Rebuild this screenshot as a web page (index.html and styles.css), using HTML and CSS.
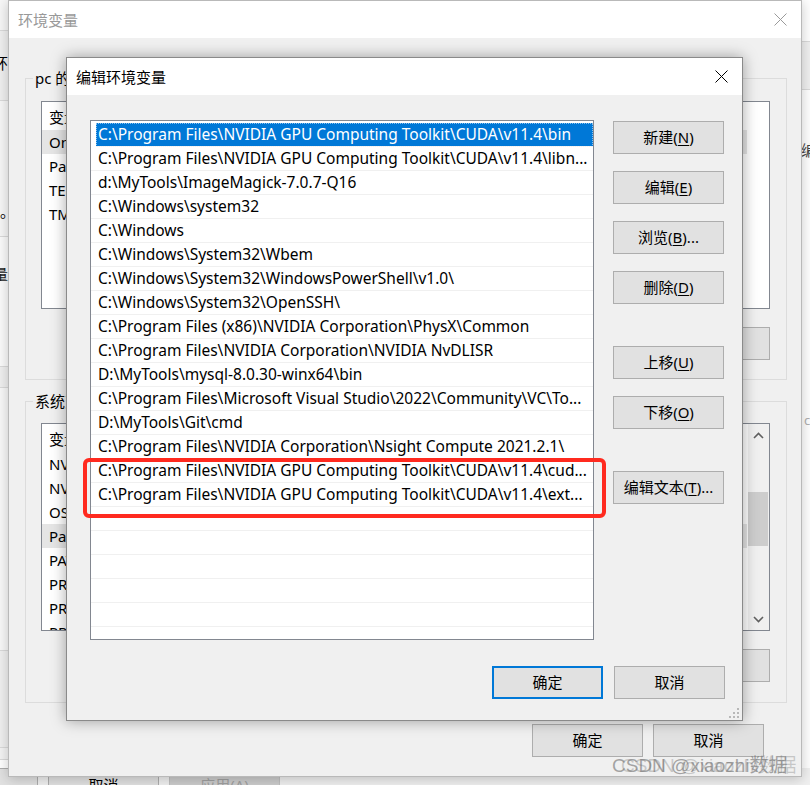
FILE: index.html
```html
<!DOCTYPE html>
<html lang="zh-CN">
<head>
<meta charset="utf-8">
<title>编辑环境变量</title>
<link rel="stylesheet" href="styles.css">
</head>
<body>
<div class="desk">

  <div class="win behind">
    <div class="behind-main">
      <div class="edge edge-left">
        <div class="el el1"></div>
        <div class="el el2 end"><span>环</span></div>
        <div class="el el3"><span>。</span></div>
        <div class="el el4 end"><span>量</span></div>
        <div class="el el5"></div>
        <div class="el el6"></div>
        <div class="el el7"></div>
        <div class="el el8"></div>
      </div>
      <div class="edge edge-right">
        <div class="er er1"></div>
        <div class="er er2"></div>
        <div class="er er3"><span>编</span></div>
        <div class="er er4"><span>c</span></div>
      </div>
    </div>
    <div class="behind-foot">
      <div class="bbtn">确定</div>
      <div class="bbtn">取消</div>
      <div class="bbtn off">应用(A)</div>
    </div>
  </div>

  <div class="win back">
    <div class="titlebar">
      <span class="title">环境变量</span>
      <span class="close"><svg width="13" height="13" viewBox="0 0 13 13"><path d="M0.5 0.5L12.5 12.5M12.5 0.5L0.5 12.5" stroke="#9a9a9a" stroke-width="1"/></svg></span>
    </div>
    <div class="back-body">
      <fieldset class="group">
        <legend>pc 的用户变量(<u>U</u>)</legend>
        <div class="lv">
          <div class="lv-main">
            <div class="lv-head"><span class="c1">变量</span><span class="c2">值</span></div>
            <div class="lv-row hl"><span class="c1">OneDrive</span><span class="c2">C:\Users\pc\OneDrive</span></div>
            <div class="lv-row"><span class="c1">Path</span><span class="c2">C:\Users\pc\AppData\Local\Microsoft\WindowsApps;</span></div>
            <div class="lv-row"><span class="c1">TEMP</span><span class="c2">C:\Users\pc\AppData\Local\Temp</span></div>
            <div class="lv-row"><span class="c1">TMP</span><span class="c2">C:\Users\pc\AppData\Local\Temp</span></div>
          </div>
        </div>
        <div class="btnrow">
          <button class="btn">新建(<u>N</u>)...</button>
          <button class="btn">编辑(<u>E</u>)...</button>
          <button class="btn">删除(<u>D</u>)</button>
        </div>
      </fieldset>
      <fieldset class="group sys">
        <legend>系统变量(<u>S</u>)</legend>
        <div class="lv">
          <div class="lv-main">
            <div class="lv-head"><span class="c1">变量</span><span class="c2">值</span></div>
            <div class="lv-row"><span class="c1">NVCUDASAMPLES_ROOT</span><span class="c2">C:\ProgramData\NVIDIA Corporation\CUDA Samples\v11.4</span></div>
            <div class="lv-row"><span class="c1">NVCUDASAMPLES11_4_ROOT</span><span class="c2">C:\ProgramData\NVIDIA Corporation\CUDA Samples\v11.4</span></div>
            <div class="lv-row"><span class="c1">OS</span><span class="c2">Windows_NT</span></div>
            <div class="lv-row hl"><span class="c1">Path</span><span class="c2">C:\Program Files\NVIDIA GPU Computing Toolkit\CUDA\v11.4\bin;</span></div>
            <div class="lv-row"><span class="c1">PATHEXT</span><span class="c2">.COM;.EXE;.BAT;.CMD;.VBS;.VBE;.JS;.JSE;.WSF;.WSH;.MSC</span></div>
            <div class="lv-row"><span class="c1">PROCESSOR_ARCHITECTURE</span><span class="c2">AMD64</span></div>
            <div class="lv-row"><span class="c1">PROCESSOR_IDENTIFIER</span><span class="c2">Intel64 Family 6</span></div>
            <div class="lv-row"><span class="c1">PROCESSOR_LEVEL</span><span class="c2">6</span></div>
          </div>
          <div class="vscroll">
            <div class="sb-btn"><svg width="11" height="7" viewBox="0 0 11 7"><path d="M1 6L5.5 1.5L10 6" fill="none" stroke="#606060" stroke-width="1.6"/></svg></div>
            <div class="sb-track"><div class="sb-thumb"></div></div>
            <div class="sb-btn"><svg width="11" height="7" viewBox="0 0 11 7"><path d="M1 1L5.5 5.5L10 1" fill="none" stroke="#606060" stroke-width="1.6"/></svg></div>
          </div>
        </div>
        <div class="btnrow">
          <button class="btn">新建(<u>W</u>)...</button>
          <button class="btn">编辑(<u>I</u>)...</button>
          <button class="btn">删除(<u>L</u>)</button>
        </div>
      </fieldset>
      <div class="back-foot">
        <button class="btn">确定</button>
        <button class="btn">取消</button>
      </div>
    </div>
  </div>

  <div class="win front">
    <div class="titlebar">
      <span class="title">编辑环境变量</span>
      <span class="close"><svg width="13" height="13" viewBox="0 0 13 13"><path d="M0.5 0.5L12.5 12.5M12.5 0.5L0.5 12.5" stroke="#000" stroke-width="1"/></svg></span>
    </div>
    <div class="front-body">
      <div class="front-main">
        <div class="plist">
          <div class="prow sel">C:\Program Files\NVIDIA GPU Computing Toolkit\CUDA\v11.4\bin</div>
          <div class="prow">C:\Program Files\NVIDIA GPU Computing Toolkit\CUDA\v11.4\libn...</div>
          <div class="prow">d:\MyTools\ImageMagick-7.0.7-Q16</div>
          <div class="prow">C:\Windows\system32</div>
          <div class="prow">C:\Windows</div>
          <div class="prow">C:\Windows\System32\Wbem</div>
          <div class="prow">C:\Windows\System32\WindowsPowerShell\v1.0\</div>
          <div class="prow">C:\Windows\System32\OpenSSH\</div>
          <div class="prow">C:\Program Files (x86)\NVIDIA Corporation\PhysX\Common</div>
          <div class="prow">C:\Program Files\NVIDIA Corporation\NVIDIA NvDLISR</div>
          <div class="prow">D:\MyTools\mysql-8.0.30-winx64\bin</div>
          <div class="prow">C:\Program Files\Microsoft Visual Studio\2022\Community\VC\To...</div>
          <div class="prow">D:\MyTools\Git\cmd</div>
          <div class="prow">C:\Program Files\NVIDIA Corporation\Nsight Compute 2021.2.1\</div>
          <div class="prow">C:\Program Files\NVIDIA GPU Computing Toolkit\CUDA\v11.4\cud...</div>
          <div class="prow">C:\Program Files\NVIDIA GPU Computing Toolkit\CUDA\v11.4\ext...</div>
          <div class="prow"></div>
          <div class="prow"></div>
          <div class="prow"></div>
          <div class="prow"></div>
          <div class="prow"></div>
          <div class="prow"></div>
        </div>
        <div class="side">
          <button class="btn">新建(<u>N</u>)</button>
          <button class="btn">编辑(<u>E</u>)</button>
          <button class="btn">浏览(<u>B</u>)...</button>
          <button class="btn">删除(<u>D</u>)</button>
          <button class="btn sep">上移(<u>U</u>)</button>
          <button class="btn">下移(<u>O</u>)</button>
          <button class="btn sep">编辑文本(<u>T</u>)...</button>
        </div>
      </div>
      <div class="front-foot">
        <button class="btn default">确定</button>
        <button class="btn">取消</button>
      </div>
      <svg class="grip" width="12" height="12" viewBox="0 0 12 12">
        <rect x="9" y="1" width="2" height="2" fill="#b8b8b8"/>
        <rect x="5" y="5" width="2" height="2" fill="#b8b8b8"/>
        <rect x="9" y="5" width="2" height="2" fill="#b8b8b8"/>
        <rect x="1" y="9" width="2" height="2" fill="#b8b8b8"/>
        <rect x="5" y="9" width="2" height="2" fill="#b8b8b8"/>
        <rect x="9" y="9" width="2" height="2" fill="#b8b8b8"/>
      </svg>
    </div>
  </div>

  <div class="mark"></div>
  <div class="watermark">CSDN @xiaozhi数据</div>
</div>
</body>
</html>
```

FILE: styles.css
```css
* { box-sizing: border-box; }
html, body { margin: 0; padding: 0; }
body {
  width: 810px;
  height: 785px;
  overflow: hidden;
  background: #fff;
  font-family: "Noto Sans", "Noto Sans CJK SC", sans-serif;
  font-size: 15px;
  color: #000;
}
u { text-decoration: underline; text-underline-offset: 2px; }

.desk { position: relative; width: 810px; height: 785px; overflow: hidden; }
.win { position: absolute; }

/* window far behind */
.behind {
  left: 0; top: 0; width: 810px; height: 785px;
  display: flex; flex-direction: column;
  background: #fff;
}
.behind-main { flex: 1; min-height: 0; display: flex; justify-content: space-between; }
.edge { display: flex; flex-direction: column; overflow: hidden; }
.edge-left { width: 8px; }
.edge-right { width: 9px; }
.el, .er {
  flex: none; display: flex; overflow: hidden; white-space: nowrap;
  line-height: 20px; border-bottom: 1px solid #dadada;
}
.el.end { justify-content: flex-end; }
.el1 { height: 31px; background: #f7f7f7; }
.el2 { height: 70px; background: #f0f0f0; padding-top: 22px; }
.el3 { height: 136px; background: #f7f7f7; padding-top: 100px; }
.el4 { height: 130px; background: #fbfbfb; padding-top: 27px; color: #222; }
.el5 { height: 21px; background: #f0f0f0; }
.el6 { height: 263px; background: #f9f9f9; }
.el7 { height: 97px; background: #f0f0f0; }
.el8 { height: 12px; background: #f4f4f4; }
.er1 { height: 42px; background: #fff; }
.er2 { height: 48px; background: #f0f0f0; }
.er3 { height: 320px; background: #fff; border-bottom: none; padding-top: 50px; color: #444; }
.er4 { height: 100px; background: #fff; border-bottom: none; color: #b0b0b0; font-size: 13px; padding-left: 3px; }

.behind-foot {
  flex: none; height: 17px; overflow: hidden;
  display: flex; gap: 10px; margin-left: -73px; background: #f0f0f0;
}
.bbtn {
  flex: none; width: 111px; height: 33px;
  border: 1px solid #adadad; background: #e1e1e1;
  display: flex; align-items: center; justify-content: center;
}
.bbtn.off { background: #cccccc; border-color: #bfbfbf; color: #a0a0a0; }

/* shared window parts */
.titlebar { flex: none; height: 37px; background: #fff; display: flex; align-items: center; }
.title { flex: 1; padding-left: 9px; line-height: 20px; }
.close { width: 42px; height: 37px; display: flex; align-items: center; justify-content: center; }

.btn {
  flex: none; width: 111px; height: 33px; margin: 0; padding: 0 0 2px;
  border: 1px solid #adadad; background: #e1e1e1;
  font: inherit; color: #000; line-height: 20px;
  display: flex; align-items: center; justify-content: center;
}
.btn.default { border: 2px solid #0078d7; }

/* environment variables window */
.back {
  left: 8px; top: 0; width: 794px; height: 777px;
  border: 1px solid #b9b9b9; background: #f0f0f0;
  box-shadow: 0 2px 12px rgba(0, 0, 0, 0.22);
  display: flex; flex-direction: column;
}
.back .title { color: #999; }
.back-body { flex: 1; padding: 30px 14px 0 16px; display: flex; flex-direction: column; }
.group {
  margin: 0; min-width: 0;
  border: 1px solid #dcdcdc;
  padding: 13px 16px 19px 15px;
}
.group.sys { margin-top: 11px; padding-top: 12px; padding-bottom: 20px; }
.group legend { padding: 0 2px; margin-left: -8px; line-height: 20px; }

.lv { height: 208px; border: 1px solid #828790; background: #fff; display: flex; overflow: hidden; }
.lv-main { flex: 1; min-width: 0; overflow: hidden; }
.lv-head { height: 28px; display: flex; align-items: center; width: 705px; }
.lv-row { height: 24px; display: flex; align-items: center; width: 705px; }
.lv-row.hl { background: #e5e5e5; }
.c1 { flex: none; width: 200px; padding-left: 7px; white-space: nowrap; overflow: hidden; }
.c2 { flex: 1; padding-left: 7px; white-space: nowrap; overflow: hidden; }

.vscroll { flex: none; width: 21px; display: flex; flex-direction: column; background: #f0f0f0; }
.sb-btn { flex: none; height: 22px; display: flex; align-items: center; justify-content: center; }
.sb-track { flex: 1; padding-top: 46px; }
.sb-thumb { height: 54px; margin-right: 1px; background: #cdcdcd; }

.btnrow { margin-top: 18px; display: flex; justify-content: flex-end; gap: 10px; }
.back-foot { margin-top: 21px; padding-right: 23px; display: flex; justify-content: flex-end; gap: 10px; }

/* edit environment variable dialog */
.front {
  left: 66px; top: 57px; width: 677px; height: 664px;
  border: 1px solid #8a8a8a; background: #f0f0f0;
  box-shadow: 0 0 14px rgba(0, 0, 0, 0.35);
  display: flex; flex-direction: column;
}
.front-body {
  position: relative; flex: 1;
  padding: 25px 17px 20px 23px;
  display: flex; flex-direction: column;
}
.front-main { display: flex; gap: 19px; }
.plist {
  flex: none; width: 504px; height: 520px;
  border: 1px solid #828790; background: #fff;
  padding-top: 2px; overflow: hidden;
}
.prow {
  height: 24px; line-height: 23px; padding-left: 7px;
  font-size: 15.5px;
  border-bottom: 1px solid #f0f0f0;
  white-space: nowrap; overflow: hidden;
}
.prow.sel {
  margin-left: 5px; padding-left: 2px;
  background: #0078d7; color: #fff;
  outline: 1px dotted rgba(255, 255, 255, 0.55); outline-offset: -1px;
}
.side { flex: none; width: 111px; padding-top: 1px; display: flex; flex-direction: column; gap: 17px; }
.side .sep { margin-top: 25px; }
.front-foot { margin-top: 26px; display: flex; justify-content: flex-end; gap: 11px; }
.grip { position: absolute; right: 2px; bottom: 1px; }

/* annotation and watermark overlays */
.mark {
  position: absolute; left: 83px; top: 458px; width: 523px; height: 60px;
  border: 4px solid #ff2a1f; border-radius: 6px;
}
.watermark {
  position: absolute; left: 612px; top: 754px;
  font-family: "Liberation Sans", "Noto Sans CJK SC", sans-serif;
  font-size: 19px; line-height: 24px; white-space: nowrap;
  color: rgba(110, 110, 110, 0.6);
  text-shadow: 9px 0 0 rgba(120, 120, 120, 0.35);
}
```
